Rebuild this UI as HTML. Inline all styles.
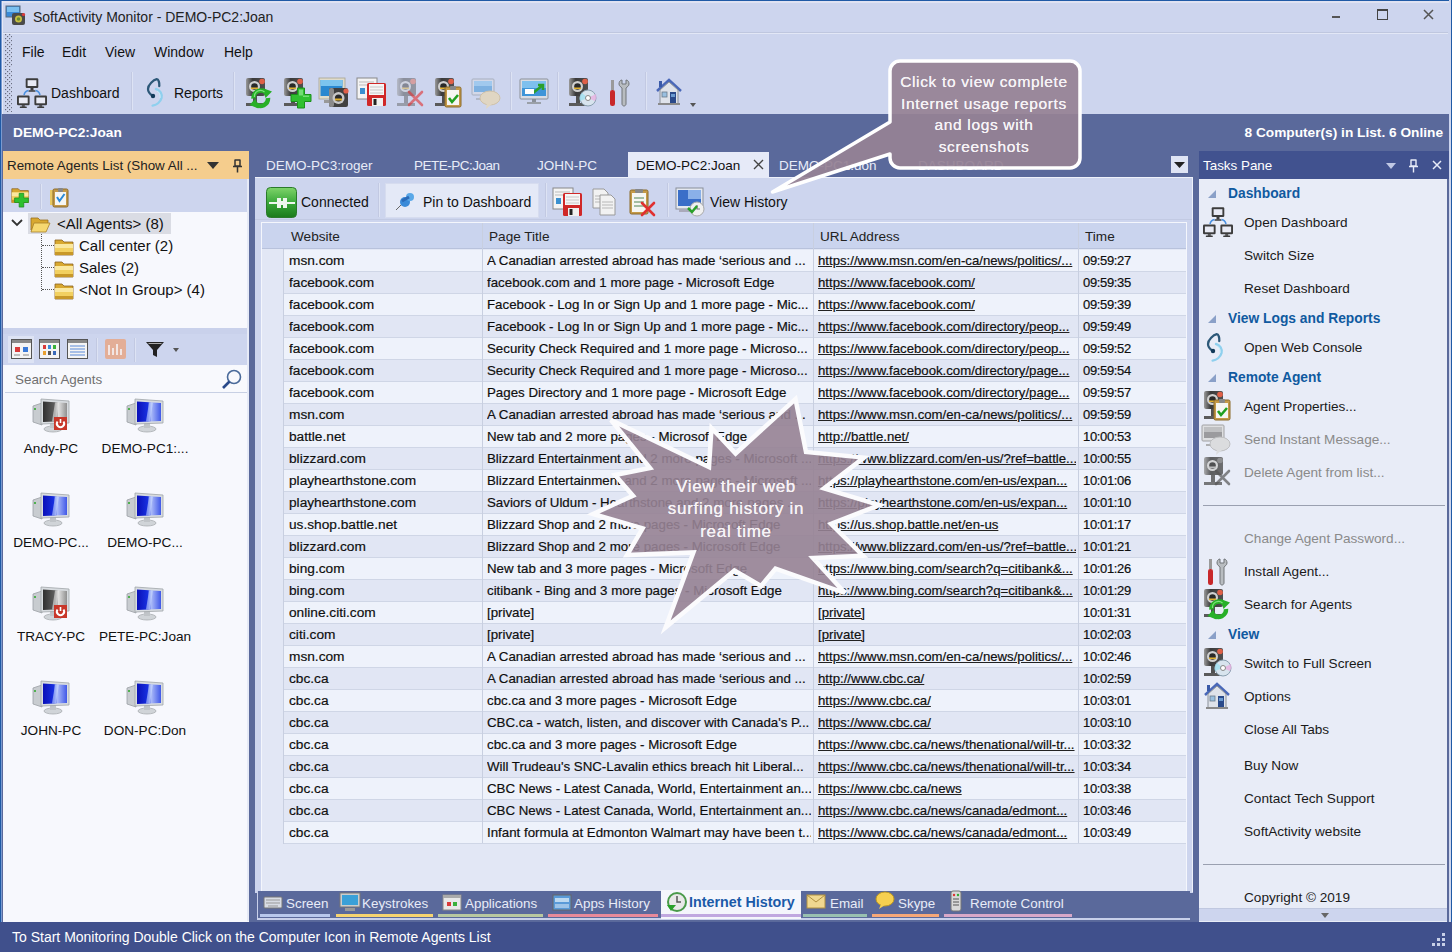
<!DOCTYPE html>
<html><head><meta charset="utf-8"><style>
*{margin:0;padding:0;box-sizing:border-box}
html,body{width:1452px;height:952px;overflow:hidden}
body{position:relative;background:#cdd5ee;font-family:"Liberation Sans",sans-serif;color:#1e1e1e}
.abs{position:absolute}
.ic{position:absolute;overflow:visible}
.t{position:absolute;white-space:nowrap;line-height:17px}
.title{font-size:14px;color:#222}
.menu{font-size:14px;color:#111}
.bandt{font-size:13.7px;font-weight:bold;color:#fff}
.pane{font-size:13.4px;color:#222}
.tree{font-size:15px;color:#111}
.agent{font-size:13.6px;color:#111;text-align:center}
.tab{font-size:13.5px;color:#e8ecf8}
.tbt{font-size:14px;color:#111}
.th{font-size:13.6px;color:#222}
.td{font-size:13.3px;color:#0a0a0a;-webkit-text-stroke:.2px #222}
.td.u{text-decoration:underline;font-size:13.2px}
.td.tm{font-size:13px;letter-spacing:-.35px}
.btab{font-size:13.4px;color:#e8ecf8}
.sect{font-size:13.8px;font-weight:bold;color:#105aa0}
.task{font-size:13.6px;color:#1a1a1a}
.task.grey{color:#8a8a8a}
.status{font-size:14px;color:#fff}
.grip{position:absolute;width:5px;background-image:linear-gradient(90deg,#cdd5ee 1px,transparent 1px),linear-gradient(#cdd5ee 1px,transparent 1px);background-color:#555a6a;background-size:2px 2px;opacity:.8}
.vsep{position:absolute;width:2px;background:#c2c9e2;border-right:1px solid #dde3f4}
.callt{font-size:16.5px;color:#f6f2f6;text-align:center;line-height:22px;letter-spacing:.4px;text-shadow:0 0 .4px #fff}
</style></head><body>
<svg width="0" height="0" style="position:absolute"><defs><linearGradient id="pcb" x1="0" x2="1"><stop offset="0" stop-color="#0a10b8"/><stop offset=".45" stop-color="#1830e0"/><stop offset=".6" stop-color="#a8b8f8"/><stop offset="1" stop-color="#4058e8"/></linearGradient><linearGradient id="pcg" x1="0" x2="1"><stop offset="0" stop-color="#303030"/><stop offset=".5" stop-color="#606060"/><stop offset=".65" stop-color="#e0e0e0"/><stop offset="1" stop-color="#909090"/></linearGradient></defs></svg><svg class="ic" style="left:5px;top:5px;" width="22" height="22" viewBox="0 0 22 22" ><rect x="1" y="1" width="14" height="11" fill="#3a8ad8" stroke="#5a6a7a" stroke-width="1"/>
<rect x="2" y="2" width="12" height="5" fill="#7ac0f0"/>
<rect x="7" y="8" width="13" height="12" rx="2" fill="#4a4a4a"/>
<circle cx="13.5" cy="14" r="3.5" fill="#c8c040"/><circle cx="13.5" cy="14" r="1.8" fill="#6a8a30"/>
<circle cx="18.5" cy="9.5" r="1.6" fill="#e03a3a"/></svg>
<div class="t title" style="left:33px;top:9px;">SoftActivity Monitor - DEMO-PC2:Joan</div>
<div class="abs" style="left:1332px;top:16px;width:8px;height:2px;background:#555"></div>
<div class="abs" style="left:1377px;top:9px;width:11px;height:11px;border:1px solid #444;border-top-width:2px"></div>
<svg class="ic" style="left:1423px;top:9px;" width="12" height="12" viewBox="0 0 12 12" ><path d="M1 1L10 10M10 1L1 10" stroke="#555" stroke-width="1.5"/></svg>
<div class="abs" style="left:2px;top:32px;width:1446px;height:1px;background:#bfc7df"></div>
<div class="abs" style="left:2px;top:33px;width:1446px;height:1px;background:#e2e7f6"></div>
<svg class="ic" style="left:5px;top:34px" width="7" height="33"><defs><pattern id="gp" width="4" height="4" patternUnits="userSpaceOnUse"><rect x="0" y="0" width="1.2" height="1.2" fill="#6a6e80"/><rect x="2" y="2" width="1.2" height="1.2" fill="#6a6e80"/></pattern></defs><rect width="7" height="33" fill="url(#gp)"/></svg>
<div class="t menu" style="left:22px;top:44px;">File</div>
<div class="t menu" style="left:62px;top:44px;">Edit</div>
<div class="t menu" style="left:105px;top:44px;">View</div>
<div class="t menu" style="left:154px;top:44px;">Window</div>
<div class="t menu" style="left:224px;top:44px;">Help</div>
<svg class="ic" style="left:5px;top:69px" width="7" height="43"><rect width="7" height="43" fill="url(#gp)"/></svg>
<svg class="ic" style="left:17px;top:77px;" width="31" height="31" viewBox="0 0 31 31" ><g fill="#3c3c3c">
<rect x="8.7" y="1.2" width="12.6" height="9.8" rx="1.2"/><rect x="13.5" y="11" width="3" height="2.5"/><rect x="11.5" y="13.2" width="7" height="1.6" rx=".6"/>
<rect x="0" y="18.6" width="12.6" height="9.6" rx="1.2"/><rect x="4.8" y="28.2" width="3" height="1.6"/><rect x="2.8" y="29.6" width="7" height="1.5" rx=".6"/>
<rect x="17.4" y="18.6" width="12.6" height="9.6" rx="1.2"/><rect x="22.2" y="28.2" width="3" height="1.6"/><rect x="20.2" y="29.6" width="7" height="1.5" rx=".6"/>
</g>
<g fill="#e8eaf4"><rect x="10.6" y="3.2" width="8.8" height="5.8"/><rect x="1.9" y="20.5" width="8.8" height="5.8"/><rect x="19.3" y="20.5" width="8.8" height="5.8"/></g>
<path d="M11.5 13.5Q8 14 7 18M18.5 13.5Q22 14 23 18" fill="none" stroke="#4a90e0" stroke-width="1.6"/></svg>
<div class="t menu" style="left:51px;top:85px;">Dashboard</div>
<div class="vsep" style="left:131px;top:72px;height:38px"></div>
<svg class="ic" style="left:145px;top:77px;" width="22" height="31" viewBox="0 0 22 31" ><path d="M11 12C15 13 17.5 17 16.5 21C15.5 25 11.5 28 7.6 28.6" fill="none" stroke="#8fd0ee" stroke-width="2.4" stroke-linecap="round"/>
<path d="M12 14C14.5 15 15.5 18 15 21" fill="none" stroke="#c8ecfa" stroke-width="1"/>
<path d="M14.3 9C14.6 5.5 13.5 2.2 11.8 2.2C8.5 3 3 7.5 3 12C3 15 5.5 17.5 8 19" fill="none" stroke="#2c5878" stroke-width="2.3" stroke-linecap="round"/>
<circle cx="8" cy="19" r="2.2" fill="#123a5a"/></svg>
<div class="t menu" style="left:174px;top:85px;">Reports</div>
<div class="vsep" style="left:233px;top:72px;height:38px"></div>
<svg class="ic" style="left:243px;top:77px;" width="32" height="32" viewBox="0 0 32 32" ><g opacity="1.0">
<defs><linearGradient id="cg" x1="0" x2="1"><stop offset="0" stop-color="#9a9a9a"/><stop offset=".35" stop-color="#3a3a3a"/><stop offset="1" stop-color="#505050"/></linearGradient></defs>
<rect x="3" y="1" width="19" height="18" rx="2" fill="url(#cg)"/>
<circle cx="11.5" cy="9.5" r="5.5" fill="#d0d0d0"/>
<circle cx="11.5" cy="9.5" r="3.3" fill="#2a2a2a"/>
<rect x="8" y="10.5" width="7" height="1.6" fill="#e0b030"/>
<circle cx="19" cy="4.5" r="2.8" fill="#e06048"/>
<rect x="10" y="19" width="4" height="7" fill="#505050"/>
<rect x="3" y="26" width="18" height="3" fill="#5a5a5a"/>
</g><g fill="none" stroke="#28b028" stroke-width="4.5">
<path d="M10.5 21.5 A7.5 7.5 0 0 1 23 15.5"/><path d="M25 21 A7.5 7.5 0 0 1 12.5 27"/></g>
<path d="M19.5 11 L29 14.5 L22.5 21 Z" fill="#28b028"/><path d="M15.5 31.5 L6.5 28 L12.5 21.5 Z" fill="#28b028"/>
<g fill="none" stroke="#90f090" stroke-width="1.2" opacity=".8"><path d="M11.5 20 A6 6 0 0 1 21.5 15"/></g></svg>
<svg class="ic" style="left:281px;top:77px;" width="32" height="32" viewBox="0 0 32 32" ><g opacity="1.0">
<defs><linearGradient id="cg" x1="0" x2="1"><stop offset="0" stop-color="#9a9a9a"/><stop offset=".35" stop-color="#3a3a3a"/><stop offset="1" stop-color="#505050"/></linearGradient></defs>
<rect x="3" y="1" width="19" height="18" rx="2" fill="url(#cg)"/>
<circle cx="11.5" cy="9.5" r="5.5" fill="#d0d0d0"/>
<circle cx="11.5" cy="9.5" r="3.3" fill="#2a2a2a"/>
<rect x="8" y="10.5" width="7" height="1.6" fill="#e0b030"/>
<circle cx="19" cy="4.5" r="2.8" fill="#e06048"/>
<rect x="10" y="19" width="4" height="7" fill="#505050"/>
<rect x="3" y="26" width="18" height="3" fill="#5a5a5a"/>
</g><path d="M16.5 11h7v6.5H30v7h-6.5V31h-7v-6.5H10v-7h6.5z" fill="#30c030" stroke="#1a901a" stroke-width="1"/>
<path d="M18 12.5h4v6h6v1.5h-6v-1.5h-4z" fill="#a0f0a0" opacity=".6"/></svg>
<svg class="ic" style="left:318px;top:77px;" width="32" height="32" viewBox="0 0 32 32" ><rect x="1" y="1" width="26" height="21" fill="#e0dccc" stroke="#a8a490" stroke-width=".8"/><rect x="2.5" y="3" width="22" height="16" fill="#2a88d0"/><rect x="2.5" y="3" width="22" height="6" fill="#7cc4ee"/><rect x="6" y="23" width="10" height="3" fill="#999"/><rect x="11" y="11" width="19" height="19" rx="2" fill="#404040"/><rect x="11" y="11" width="5" height="19" rx="2" fill="#8a8a8a"/><circle cx="20.5" cy="21" r="6" fill="#c8c8c8"/><circle cx="20.5" cy="21" r="3.6" fill="#2a2a2a"/><rect x="17" y="21.5" width="7" height="2" fill="#e0b030"/><circle cx="28" cy="14" r="2.6" fill="#e06048"/></svg>
<svg class="ic" style="left:355px;top:77px;" width="32" height="32" viewBox="0 0 32 32" ><rect x="2" y="1" width="20" height="21" fill="#f4f4f4" stroke="#888" stroke-width="1"/><path d="M4 5h15M4 8h15" stroke="#bbb"/><rect x="5" y="11" width="5" height="6" fill="#3a90d0"/><rect x="12" y="6" width="19" height="23" rx="1.5" fill="#d02828"/><rect x="14" y="7" width="15" height="11" fill="#f6f6f6"/><path d="M15 10h13M15 13h13M15 16h13" stroke="#c8c8c8"/><rect x="17" y="21" width="11" height="8" fill="#f0f0f0"/><rect x="18.5" y="22" width="3" height="6" fill="#222"/></svg>
<svg class="ic" style="left:394px;top:77px;" width="32" height="32" viewBox="0 0 32 32" ><g opacity="0.45">
<defs><linearGradient id="cg" x1="0" x2="1"><stop offset="0" stop-color="#9a9a9a"/><stop offset=".35" stop-color="#3a3a3a"/><stop offset="1" stop-color="#505050"/></linearGradient></defs>
<rect x="3" y="1" width="19" height="18" rx="2" fill="url(#cg)"/>
<circle cx="11.5" cy="9.5" r="5.5" fill="#d0d0d0"/>
<circle cx="11.5" cy="9.5" r="3.3" fill="#2a2a2a"/>
<rect x="8" y="10.5" width="7" height="1.6" fill="#e0b030"/>
<circle cx="19" cy="4.5" r="2.8" fill="#e06048"/>
<rect x="10" y="19" width="4" height="7" fill="#505050"/>
<rect x="3" y="26" width="18" height="3" fill="#5a5a5a"/>
</g><path d="M15 15L28 28M28 15L15 28" stroke="#e03030" stroke-width="2.6" stroke-linecap="round" opacity="0.6"/></svg>
<svg class="ic" style="left:432px;top:77px;" width="32" height="32" viewBox="0 0 32 32" ><g opacity="1.0">
<defs><linearGradient id="cg" x1="0" x2="1"><stop offset="0" stop-color="#9a9a9a"/><stop offset=".35" stop-color="#3a3a3a"/><stop offset="1" stop-color="#505050"/></linearGradient></defs>
<rect x="3" y="1" width="19" height="18" rx="2" fill="url(#cg)"/>
<circle cx="11.5" cy="9.5" r="5.5" fill="#d0d0d0"/>
<circle cx="11.5" cy="9.5" r="3.3" fill="#2a2a2a"/>
<rect x="8" y="10.5" width="7" height="1.6" fill="#e0b030"/>
<circle cx="19" cy="4.5" r="2.8" fill="#e06048"/>
<rect x="10" y="19" width="4" height="7" fill="#505050"/>
<rect x="3" y="26" width="18" height="3" fill="#5a5a5a"/>
</g><rect x="13" y="10" width="16" height="20" rx="1.5" fill="#c59a48" stroke="#8a6a2a" stroke-width="1"/>
<rect x="15" y="13" width="12" height="15" fill="#f6f6f2"/>
<rect x="18" y="9" width="6" height="4" rx="1" fill="#888"/><path d="M17 21l3 4l6 -7" fill="none" stroke="#20a020" stroke-width="2.6"/></svg>
<svg class="ic" style="left:471px;top:77px;" width="32" height="32" viewBox="0 0 32 32" ><g opacity=".55"><rect x="1" y="2" width="22" height="16" rx="1" fill="#d8dce4" stroke="#8a9099" stroke-width="1"/>
<rect x="3" y="4" width="18" height="11" fill="#3f95d8"/>
<rect x="3" y="4" width="18" height="5" fill="#7ec0ee"/>
<rect x="10" y="18" width="4" height="3" fill="#8a9099"/>
<rect x="5" y="21" width="14" height="2" fill="#9aa0a8"/><g opacity="1"><ellipse cx="19" cy="21" rx="10" ry="7" fill="#f0d8a0" stroke="#d0b070" stroke-width="1"/><path d="M16 26l-1 6l6 -5z" fill="#f0d8a0"/></g></g></svg>
<svg class="ic" style="left:519px;top:77px;" width="32" height="32" viewBox="0 0 32 32" ><rect x="1" y="2" width="28" height="20" rx="1" fill="#d8dce4" stroke="#8a9099" stroke-width="1"/>
<rect x="3" y="4" width="24" height="15" fill="#3f95d8"/>
<rect x="3" y="4" width="24" height="7" fill="#7ec0ee"/>
<rect x="13" y="22" width="4" height="3" fill="#8a9099"/>
<rect x="8" y="25" width="14" height="2" fill="#9aa0a8"/><path d="M14 16L24 8M19 8h5v5" stroke="#2aa02a" stroke-width="2.5" fill="none"/><rect x="6" y="12" width="9" height="5" fill="#fff"/></svg>
<svg class="ic" style="left:566px;top:77px;" width="32" height="32" viewBox="0 0 32 32" ><g opacity="1.0">
<defs><linearGradient id="cg" x1="0" x2="1"><stop offset="0" stop-color="#9a9a9a"/><stop offset=".35" stop-color="#3a3a3a"/><stop offset="1" stop-color="#505050"/></linearGradient></defs>
<rect x="3" y="1" width="19" height="18" rx="2" fill="url(#cg)"/>
<circle cx="11.5" cy="9.5" r="5.5" fill="#d0d0d0"/>
<circle cx="11.5" cy="9.5" r="3.3" fill="#2a2a2a"/>
<rect x="8" y="10.5" width="7" height="1.6" fill="#e0b030"/>
<circle cx="19" cy="4.5" r="2.8" fill="#e06048"/>
<rect x="10" y="19" width="4" height="7" fill="#505050"/>
<rect x="3" y="26" width="18" height="3" fill="#5a5a5a"/>
</g><circle cx="22" cy="21" r="8" fill="#d8e4ee" stroke="#8aa0b0" stroke-width="1"/>
<path d="M22 21L30 17A8 8 0 0 1 29 24z" fill="#e8b0e0" opacity=".8"/>
<path d="M22 21L14 24A8 8 0 0 1 16 16z" fill="#a0e0f0" opacity=".8"/>
<circle cx="22" cy="21" r="2.5" fill="#fff" stroke="#888" stroke-width="1"/></svg>
<svg class="ic" style="left:608px;top:77px;" width="32" height="32" viewBox="0 0 32 32" ><rect x="3" y="3" width="3" height="10" fill="#9a9a9a"/>
<rect x="2" y="13" width="5" height="16" rx="2.2" fill="#c8282a"/>
<path d="M14 3c-2 0-3 2-3 4s2 3 3 4v16c0 1 1 2 2 2s2-1 2-2V11c1-1 3-2 3-4s-1-4-3-4v4h-4z" fill="#b8bcc0" stroke="#707478" stroke-width="1"/></svg>
<svg class="ic" style="left:654px;top:77px;" width="32" height="32" viewBox="0 0 32 32" ><path d="M3 14L15 3L27 14" fill="none" stroke="#4a68b8" stroke-width="2.5"/>
<rect x="5" y="4" width="3" height="6" fill="#3a5aa8"/>
<path d="M6 13L15 5L24 13V27H6z" fill="#dfe3ea" stroke="#8a9098" stroke-width="1"/>
<rect x="8" y="15" width="5" height="5" fill="#9ac0e0" stroke="#6a7a8a" stroke-width=".8"/>
<rect x="16" y="15" width="6" height="12" fill="#2a4a8a"/>
<rect x="17" y="17" width="4" height="3" fill="#6a9ad0"/>
<rect x="4" y="26" width="22" height="2" fill="#8a8a8a"/></svg>
<div class="vsep" style="left:510px;top:72px;height:38px"></div>
<div class="vsep" style="left:557px;top:72px;height:38px"></div>
<div class="vsep" style="left:645px;top:72px;height:38px"></div>
<svg class="ic" style="left:690px;top:103px;" width="6" height="4" viewBox="0 0 6 4" ><path d="M0 0h6l-3 4z" fill="#555"/></svg>
<div class="abs" style="left:2px;top:114px;width:1448px;height:808px;background:#5a699b"></div>
<div class="t bandt" style="left:13px;top:124px;">DEMO-PC2:Joan</div>
<div class="t bandt" style="right:9px;top:124px">8 Computer(s) in List. 6 Online</div>
<div class="abs" style="left:3px;top:151px;width:246px;height:771px;background:#f7f8fd"></div>
<div class="abs" style="left:3px;top:151px;width:246px;height:28px;background:#f5cd8d"></div>
<div class="t pane" style="left:7px;top:157px;">Remote Agents List (Show All ...</div>
<svg class="ic" style="left:207px;top:162px;" width="12" height="8" viewBox="0 0 12 8" ><path d="M0 0h12l-6 7z" fill="#333"/></svg>
<svg class="ic" style="left:232px;top:159px;" width="11" height="14" viewBox="0 0 11 14" ><path d="M2.5 1h6M3 1v6h5V1M1 7.5h9M5.5 7.5v6" stroke="#333" stroke-width="1.5" fill="none"/></svg>
<div class="abs" style="left:3px;top:179px;width:246px;height:33px;background:#cdd5ee"></div>
<svg class="ic" style="left:10px;top:186px;" width="22" height="22" viewBox="0 0 22 24" ><path d="M1 3h7l2 2h9v13H1z" fill="#d8a830" stroke="#8a6020" stroke-width=".8"/>
<rect x="1" y="7" width="18" height="11" fill="#f2d060"/>
<rect x="1" y="7" width="18" height="4" fill="#fae8a0"/>
<rect x="1" y="15" width="18" height="3" fill="#c89828"/><path d="M9 8h5v5h5v5h-5v5h-5v-5H4v-5h5z" fill="#2ec02e" stroke="#1a8a1a" stroke-width=".8"/></svg>
<div class="vsep" style="left:40px;top:184px;height:25px"></div>
<svg class="ic" style="left:49px;top:186px;" width="22" height="22" viewBox="0 0 22 22" ><rect x="1" y="4" width="6" height="15" fill="#e8c860"/><rect x="4" y="3" width="15" height="18" rx="1.5" fill="#c59a48" stroke="#8a6a2a" stroke-width="1"/>
<rect x="6" y="6" width="11" height="13" fill="#f6f6f2"/>
<rect x="9" y="2" width="5" height="4" rx="1" fill="#888"/><path d="M8 11l2.5 4l5-7" fill="none" stroke="#2a8ad8" stroke-width="2"/></svg>
<div class="abs" style="left:28px;top:213px;width:143px;height:21px;background:#dadce4"></div>
<svg class="ic" style="left:11px;top:219px;" width="12" height="9" viewBox="0 0 12 9" ><path d="M1 1l5 5l5-5" stroke="#333" stroke-width="1.8" fill="none"/></svg>
<svg class="ic" style="left:30px;top:214px;" width="22" height="20" viewBox="0 0 22 20" ><path d="M1 4h7l2 2h8v4H5L1 16z" fill="#d8a830" stroke="#9a7020" stroke-width=".8"/>
<path d="M4 9h16l-4 9H1z" fill="#f6d870" stroke="#a88028" stroke-width=".8"/></svg>
<div class="t tree" style="left:57px;top:215px;">&lt;All Agents&gt; (8)</div>
<div class="abs" style="left:41px;top:234px;width:0;height:57px;border-left:1px dotted #555"></div>
<div class="abs" style="left:42px;top:245px;width:12px;height:0;border-top:1px dotted #555"></div>
<svg class="ic" style="left:54px;top:237px;" width="20" height="19" viewBox="0 0 20 19" ><path d="M1 3h7l2 2h9v13H1z" fill="#d8a830" stroke="#8a6020" stroke-width=".8"/>
<rect x="1" y="7" width="18" height="11" fill="#f2d060"/>
<rect x="1" y="7" width="18" height="4" fill="#fae8a0"/>
<rect x="1" y="15" width="18" height="3" fill="#c89828"/></svg>
<div class="t tree" style="left:79px;top:237px;">Call center (2)</div>
<div class="abs" style="left:42px;top:267px;width:12px;height:0;border-top:1px dotted #555"></div>
<svg class="ic" style="left:54px;top:259px;" width="20" height="19" viewBox="0 0 20 19" ><path d="M1 3h7l2 2h9v13H1z" fill="#d8a830" stroke="#8a6020" stroke-width=".8"/>
<rect x="1" y="7" width="18" height="11" fill="#f2d060"/>
<rect x="1" y="7" width="18" height="4" fill="#fae8a0"/>
<rect x="1" y="15" width="18" height="3" fill="#c89828"/></svg>
<div class="t tree" style="left:79px;top:259px;">Sales (2)</div>
<div class="abs" style="left:42px;top:289px;width:12px;height:0;border-top:1px dotted #555"></div>
<svg class="ic" style="left:54px;top:281px;" width="20" height="19" viewBox="0 0 20 19" ><path d="M1 3h7l2 2h9v13H1z" fill="#d8a830" stroke="#8a6020" stroke-width=".8"/>
<rect x="1" y="7" width="18" height="11" fill="#f2d060"/>
<rect x="1" y="7" width="18" height="4" fill="#fae8a0"/>
<rect x="1" y="15" width="18" height="3" fill="#c89828"/></svg>
<div class="t tree" style="left:79px;top:281px;">&lt;Not In Group&gt; (4)</div>
<div class="abs" style="left:3px;top:328px;width:246px;height:6px;background:#c9d1eb"></div>
<div class="abs" style="left:3px;top:334px;width:246px;height:31px;background:#cdd5ee"></div>
<div class="abs" style="left:8px;top:336px;width:26px;height:27px;background:#dde3f4"></div>
<svg class="ic" style="left:11px;top:339px;" width="21" height="20" viewBox="0 0 21 20" ><rect x=".5" y=".5" width="20" height="19" fill="#f4f4f4" stroke="#555" stroke-width="1"/><rect x="1" y="1" width="19" height="3" fill="#888"/><rect x="4" y="8" width="5" height="5" fill="#d83a3a"/><rect x="12" y="8" width="5" height="5" fill="#3a7ad8"/><path d="M3 16h6M12 16h6" stroke="#888"/></svg>
<svg class="ic" style="left:39px;top:339px;" width="21" height="20" viewBox="0 0 21 20" ><rect x=".5" y=".5" width="20" height="19" fill="#f4f4f4" stroke="#555" stroke-width="1"/><rect x="1" y="1" width="19" height="3" fill="#888"/><rect x="4" y="6" width="3" height="4" fill="#d83a3a"/><rect x="9" y="6" width="3" height="4" fill="#3a8ad8"/><rect x="14" y="6" width="3" height="4" fill="#3ab03a"/><rect x="4" y="12" width="3" height="4" fill="#e8a030"/><rect x="9" y="12" width="3" height="4" fill="#555"/><rect x="14" y="12" width="3" height="4" fill="#3a6ab8"/></svg>
<svg class="ic" style="left:67px;top:339px;" width="21" height="20" viewBox="0 0 21 20" ><rect x=".5" y=".5" width="20" height="19" fill="#f4f4f4" stroke="#555" stroke-width="1"/><rect x="1" y="1" width="19" height="3" fill="#888"/><path d="M3 7h15M3 10h15M3 13h15M3 16h15" stroke="#5a8ad8" stroke-width="1"/></svg>
<div class="vsep" style="left:96px;top:338px;height:24px"></div>
<svg class="ic" style="left:105px;top:339px;" width="21" height="20" viewBox="0 0 21 20" opacity="0.85"><rect x="0" y="0" width="21" height="20" rx="2" fill="#e8a888"/><path d="M4 16V6M8 16V9M12 16V5M16 16V10" stroke="#fff" stroke-width="1.5"/></svg>
<div class="vsep" style="left:134px;top:338px;height:24px"></div>
<svg class="ic" style="left:145px;top:341px;" width="20" height="17" viewBox="0 0 20 17" ><path d="M1 1h18l-7 8v7l-4-2V9z" fill="#222"/><path d="M3 2h14l-1 1H4z" fill="#aaa"/></svg>
<svg class="ic" style="left:173px;top:348px;" width="6" height="4" viewBox="0 0 6 4" ><path d="M0 0h6l-3 4z" fill="#555"/></svg>
<div class="abs" style="left:5px;top:366px;width:242px;height:27px;background:#f8f9fd;border-bottom:1px solid #c8d0e4"></div>
<div class="t pane" style="left:15px;top:371px;color:#707070">Search Agents</div>
<svg class="ic" style="left:221px;top:369px;" width="22" height="22" viewBox="0 0 22 22" ><circle cx="13" cy="8" r="6.5" fill="none" stroke="#4a6a9a" stroke-width="1.6"/><path d="M8.5 12.5L2 19" stroke="#2a4a8a" stroke-width="2.6"/></svg>
<svg class="ic" style="left:31px;top:396px;" width="40" height="37" viewBox="0 0 40 37" ><path d="M2 10l9-3v22l-9-3z" fill="#c8ccd0" stroke="#9aa0a4" stroke-width=".8"/>
<rect x="3" y="12" width="2" height="2" fill="#50b050"/>
<ellipse cx="22" cy="33" rx="9" ry="3" fill="#d0d4d8" stroke="#a8acb0" stroke-width=".8"/>
<rect x="19" y="27" width="6" height="5" fill="#c0c4c8"/>
<path d="M10 3l28 2v22l-28 1z" fill="#d8dce0" stroke="#a0a4a8" stroke-width=".8"/>
<path d="M12 5.5l24 1.5v18l-24 1z" fill="url(#pcg)"/>
<path d="M24 6.5l4 .3l-3 18.5l-4 .2z" fill="#e8e8e8" opacity=".6"/><rect x="23" y="21" width="13" height="13" fill="#c8372a"/>
<path d="M26.5 25.5a3.6 3.6 0 1 0 6 0" fill="none" stroke="#fff" stroke-width="2"/><rect x="28.7" y="23" width="1.6" height="4" fill="#fff"/></svg>
<div class="t agent" style="left:-9px;width:120px;top:440px">Andy-PC</div>
<svg class="ic" style="left:125px;top:396px;" width="40" height="37" viewBox="0 0 40 37" ><path d="M2 10l9-3v22l-9-3z" fill="#c8ccd0" stroke="#9aa0a4" stroke-width=".8"/>
<rect x="3" y="12" width="2" height="2" fill="#50b050"/>
<ellipse cx="22" cy="33" rx="9" ry="3" fill="#d0d4d8" stroke="#a8acb0" stroke-width=".8"/>
<rect x="19" y="27" width="6" height="5" fill="#c0c4c8"/>
<path d="M10 3l28 2v22l-28 1z" fill="#d8dce0" stroke="#a0a4a8" stroke-width=".8"/>
<path d="M12 5.5l24 1.5v18l-24 1z" fill="url(#pcb)"/>
<path d="M24 6.5l4 .3l-3 18.5l-4 .2z" fill="#c8d8ff" opacity=".6"/></svg>
<div class="t agent" style="left:85px;width:120px;top:440px">DEMO-PC1:...</div>
<svg class="ic" style="left:31px;top:490px;" width="40" height="37" viewBox="0 0 40 37" ><path d="M2 10l9-3v22l-9-3z" fill="#c8ccd0" stroke="#9aa0a4" stroke-width=".8"/>
<rect x="3" y="12" width="2" height="2" fill="#50b050"/>
<ellipse cx="22" cy="33" rx="9" ry="3" fill="#d0d4d8" stroke="#a8acb0" stroke-width=".8"/>
<rect x="19" y="27" width="6" height="5" fill="#c0c4c8"/>
<path d="M10 3l28 2v22l-28 1z" fill="#d8dce0" stroke="#a0a4a8" stroke-width=".8"/>
<path d="M12 5.5l24 1.5v18l-24 1z" fill="url(#pcb)"/>
<path d="M24 6.5l4 .3l-3 18.5l-4 .2z" fill="#c8d8ff" opacity=".6"/></svg>
<div class="t agent" style="left:-9px;width:120px;top:534px">DEMO-PC...</div>
<svg class="ic" style="left:125px;top:490px;" width="40" height="37" viewBox="0 0 40 37" ><path d="M2 10l9-3v22l-9-3z" fill="#c8ccd0" stroke="#9aa0a4" stroke-width=".8"/>
<rect x="3" y="12" width="2" height="2" fill="#50b050"/>
<ellipse cx="22" cy="33" rx="9" ry="3" fill="#d0d4d8" stroke="#a8acb0" stroke-width=".8"/>
<rect x="19" y="27" width="6" height="5" fill="#c0c4c8"/>
<path d="M10 3l28 2v22l-28 1z" fill="#d8dce0" stroke="#a0a4a8" stroke-width=".8"/>
<path d="M12 5.5l24 1.5v18l-24 1z" fill="url(#pcb)"/>
<path d="M24 6.5l4 .3l-3 18.5l-4 .2z" fill="#c8d8ff" opacity=".6"/></svg>
<div class="t agent" style="left:85px;width:120px;top:534px">DEMO-PC...</div>
<svg class="ic" style="left:31px;top:584px;" width="40" height="37" viewBox="0 0 40 37" ><path d="M2 10l9-3v22l-9-3z" fill="#c8ccd0" stroke="#9aa0a4" stroke-width=".8"/>
<rect x="3" y="12" width="2" height="2" fill="#50b050"/>
<ellipse cx="22" cy="33" rx="9" ry="3" fill="#d0d4d8" stroke="#a8acb0" stroke-width=".8"/>
<rect x="19" y="27" width="6" height="5" fill="#c0c4c8"/>
<path d="M10 3l28 2v22l-28 1z" fill="#d8dce0" stroke="#a0a4a8" stroke-width=".8"/>
<path d="M12 5.5l24 1.5v18l-24 1z" fill="url(#pcg)"/>
<path d="M24 6.5l4 .3l-3 18.5l-4 .2z" fill="#e8e8e8" opacity=".6"/><rect x="23" y="21" width="13" height="13" fill="#c8372a"/>
<path d="M26.5 25.5a3.6 3.6 0 1 0 6 0" fill="none" stroke="#fff" stroke-width="2"/><rect x="28.7" y="23" width="1.6" height="4" fill="#fff"/></svg>
<div class="t agent" style="left:-9px;width:120px;top:628px">TRACY-PC</div>
<svg class="ic" style="left:125px;top:584px;" width="40" height="37" viewBox="0 0 40 37" ><path d="M2 10l9-3v22l-9-3z" fill="#c8ccd0" stroke="#9aa0a4" stroke-width=".8"/>
<rect x="3" y="12" width="2" height="2" fill="#50b050"/>
<ellipse cx="22" cy="33" rx="9" ry="3" fill="#d0d4d8" stroke="#a8acb0" stroke-width=".8"/>
<rect x="19" y="27" width="6" height="5" fill="#c0c4c8"/>
<path d="M10 3l28 2v22l-28 1z" fill="#d8dce0" stroke="#a0a4a8" stroke-width=".8"/>
<path d="M12 5.5l24 1.5v18l-24 1z" fill="url(#pcb)"/>
<path d="M24 6.5l4 .3l-3 18.5l-4 .2z" fill="#c8d8ff" opacity=".6"/></svg>
<div class="t agent" style="left:85px;width:120px;top:628px">PETE-PC:Joan</div>
<svg class="ic" style="left:31px;top:678px;" width="40" height="37" viewBox="0 0 40 37" ><path d="M2 10l9-3v22l-9-3z" fill="#c8ccd0" stroke="#9aa0a4" stroke-width=".8"/>
<rect x="3" y="12" width="2" height="2" fill="#50b050"/>
<ellipse cx="22" cy="33" rx="9" ry="3" fill="#d0d4d8" stroke="#a8acb0" stroke-width=".8"/>
<rect x="19" y="27" width="6" height="5" fill="#c0c4c8"/>
<path d="M10 3l28 2v22l-28 1z" fill="#d8dce0" stroke="#a0a4a8" stroke-width=".8"/>
<path d="M12 5.5l24 1.5v18l-24 1z" fill="url(#pcb)"/>
<path d="M24 6.5l4 .3l-3 18.5l-4 .2z" fill="#c8d8ff" opacity=".6"/></svg>
<div class="t agent" style="left:-9px;width:120px;top:722px">JOHN-PC</div>
<svg class="ic" style="left:125px;top:678px;" width="40" height="37" viewBox="0 0 40 37" ><path d="M2 10l9-3v22l-9-3z" fill="#c8ccd0" stroke="#9aa0a4" stroke-width=".8"/>
<rect x="3" y="12" width="2" height="2" fill="#50b050"/>
<ellipse cx="22" cy="33" rx="9" ry="3" fill="#d0d4d8" stroke="#a8acb0" stroke-width=".8"/>
<rect x="19" y="27" width="6" height="5" fill="#c0c4c8"/>
<path d="M10 3l28 2v22l-28 1z" fill="#d8dce0" stroke="#a0a4a8" stroke-width=".8"/>
<path d="M12 5.5l24 1.5v18l-24 1z" fill="url(#pcb)"/>
<path d="M24 6.5l4 .3l-3 18.5l-4 .2z" fill="#c8d8ff" opacity=".6"/></svg>
<div class="t agent" style="left:85px;width:120px;top:722px">DON-PC:Don</div>
<div class="abs" style="left:247px;top:179px;width:2px;height:742px;background:#e6eaf6"></div>
<div class="abs" style="left:255px;top:177px;width:938px;height:716px;background:#cdd5ee"></div>
<div class="abs" style="left:255px;top:177px;width:938px;height:1px;background:#eef1fa"></div>
<div class="abs" style="left:261px;top:222px;width:926px;height:670px;background:#e2e7f5;border-left:1px solid #f4f6fc;border-right:1px solid #f4f6fc"></div>
<div class="abs" style="left:255px;top:219px;width:938px;height:1px;background:#c2cae3"></div>
<div class="abs" style="left:1192px;top:177px;width:1px;height:715px;background:#eef1fa"></div>
<div class="t tab" style="left:266px;top:157px;">DEMO-PC3:roger</div>
<div class="t tab" style="left:414px;top:157px;letter-spacing:-.5px">PETE-PC:Joan</div>
<div class="t tab" style="left:537px;top:157px;">JOHN-PC</div>
<div class="t tab" style="left:779px;top:157px;">DEMO-PC1:don</div>
<div class="t tab" style="left:918px;top:157px;">DASHBOARD</div>
<div class="abs" style="left:628px;top:152px;width:141px;height:26px;background:#e6eaf8"></div>
<div class="t tab" style="left:636px;top:157px;color:#111">DEMO-PC2:Joan</div>
<svg class="ic" style="left:753px;top:159px;" width="11" height="11" viewBox="0 0 11 11" ><path d="M1 1L10 10M10 1L1 10" stroke="#444" stroke-width="1.4"/></svg>
<div class="abs" style="left:1171px;top:156px;width:17px;height:17px;background:#dfe4f4"></div>
<svg class="ic" style="left:1174px;top:162px;" width="11" height="7" viewBox="0 0 11 7" ><path d="M0 0h11l-5.5 6z" fill="#222"/></svg>
<svg class="ic" style="left:266px;top:187px;" width="32" height="31" viewBox="0 0 32 31" ><defs><linearGradient id="gg" x1="0" y1="0" x2="0" y2="1"><stop offset="0" stop-color="#7fd46a"/><stop offset=".5" stop-color="#3aa83a"/><stop offset="1" stop-color="#1a7a1a"/></linearGradient></defs>
<rect x=".5" y=".5" width="30" height="30" rx="4" fill="url(#gg)" stroke="#2a7a2a"/>
<path d="M3 15h8v-4h4v3h2v-3h4v4h8v2h-8v4h-4v-3h-2v3h-4v-4H3z" fill="#eef6ee"/></svg>
<div class="t tbt" style="left:301px;top:194px;">Connected</div>
<div class="vsep" style="left:378px;top:183px;height:34px"></div>
<div class="abs" style="left:385px;top:183px;width:154px;height:35px;background:#e4e9f7;border:1px solid #d6dcef"></div>
<svg class="ic" style="left:393px;top:192px;" width="24" height="20" viewBox="0 0 24 20" ><path d="M3 18l6-6" stroke="#666" stroke-width="1"/><circle cx="12" cy="10" r="5" fill="#3a8ad8"/><circle cx="17" cy="5" r="4" fill="#5aa8e8"/><path d="M9 9l7-4" stroke="#2a6ab8" stroke-width="3"/></svg>
<div class="t tbt" style="left:423px;top:194px;">Pin to Dashboard</div>
<div class="vsep" style="left:545px;top:183px;height:34px"></div>
<svg class="ic" style="left:551px;top:186px;" width="32" height="32" viewBox="0 0 32 32" ><rect x="2" y="2" width="20" height="21" fill="#f4f4f4" stroke="#888" stroke-width="1"/><path d="M4 6h15M4 9h15" stroke="#bbb"/><rect x="5" y="12" width="5" height="6" fill="#3a90d0"/><rect x="12" y="7" width="19" height="23" rx="1.5" fill="#d02828"/><rect x="14" y="8" width="15" height="11" fill="#f6f6f6"/><path d="M15 11h13M15 14h13M15 17h13" stroke="#c8c8c8"/><rect x="17" y="22" width="11" height="8" fill="#f0f0f0"/><rect x="18.5" y="23" width="3" height="6" fill="#222"/></svg>
<svg class="ic" style="left:591px;top:186px;" width="28" height="32" viewBox="0 0 28 32" ><path d="M2 3h11l4 4v15h-15z" fill="#f2f2f2" stroke="#9a9a9a" stroke-width="1"/>
<path d="M4 10h11M4 13h11M4 16h11" stroke="#b8b8b8" stroke-width="1"/><path d="M9 9h11l4 4v16h-15z" fill="#f2f2f2" stroke="#9a9a9a" stroke-width="1"/>
<path d="M11 16h11M11 19h11M11 22h11" stroke="#b8b8b8" stroke-width="1"/></svg>
<svg class="ic" style="left:627px;top:186px;" width="32" height="32" viewBox="0 0 32 32" ><rect x="3" y="4" width="18" height="24" rx="1.5" fill="#c59a48" stroke="#8a6a2a" stroke-width="1"/>
<rect x="5" y="7" width="14" height="19" fill="#f6f6f2"/>
<rect x="8" y="3" width="8" height="4" rx="1" fill="#888"/><path d="M7 12h10M7 16h10M7 20h10" stroke="#8a8" stroke-width="1.5"/><path d="M15 17L27 29M27 17L15 29" stroke="#e03030" stroke-width="2.6" stroke-linecap="round" opacity="1"/></svg>
<div class="vsep" style="left:667px;top:183px;height:34px"></div>
<svg class="ic" style="left:675px;top:186px;" width="32" height="32" viewBox="0 0 32 32" ><rect x="1" y="2" width="27" height="21" fill="#e4e8f0" stroke="#8a9099"/><rect x="3" y="4" width="23" height="16" fill="#3a6ec8"/>
<rect x="13" y="4" width="13" height="9" fill="#8ab0e8"/><rect x="4" y="23" width="20" height="3" fill="#aab"/>
<circle cx="22" cy="23" r="7" fill="#f0f0f0" stroke="#aaa"/><path d="M22 19v4h3" stroke="#777" stroke-width="1.2" fill="none"/>
<path d="M13 22l4 4l5-6" stroke="#2aa02a" stroke-width="2.5" fill="none"/></svg>
<div class="t tbt" style="left:710px;top:194px;">View History</div>
<div class="abs" style="left:261px;top:222px;width:926px;height:1px;background:#f4f6fc"></div>
<div class="abs" style="left:262px;top:223px;width:924px;height:26px;background:#cad4ee"></div>
<div class="abs" style="left:262px;top:248px;width:924px;height:1px;background:#b8c2dc"></div>
<div class="abs" style="left:482px;top:223px;width:1px;height:620px;background:#c8cfe0"></div>
<div class="abs" style="left:813px;top:223px;width:1px;height:620px;background:#c8cfe0"></div>
<div class="abs" style="left:1078px;top:223px;width:1px;height:620px;background:#c8cfe0"></div>
<div class="abs" style="left:283px;top:249px;width:1px;height:595px;background:#c8cfe0"></div>
<div class="t th" style="left:291px;top:228px;">Website</div>
<div class="t th" style="left:489px;top:228px;">Page Title</div>
<div class="t th" style="left:820px;top:228px;">URL Address</div>
<div class="t th" style="left:1085px;top:228px;">Time</div>
<div class="abs" style="left:284px;top:250px;width:902px;height:22px;background:#eef2fb;border-bottom:1px solid #cfd6e6"></div>
<div class="abs" style="left:284px;top:272px;width:902px;height:22px;background:#e1e6f4;border-bottom:1px solid #cfd6e6"></div>
<div class="abs" style="left:284px;top:294px;width:902px;height:22px;background:#eef2fb;border-bottom:1px solid #cfd6e6"></div>
<div class="abs" style="left:284px;top:316px;width:902px;height:22px;background:#e1e6f4;border-bottom:1px solid #cfd6e6"></div>
<div class="abs" style="left:284px;top:338px;width:902px;height:22px;background:#eef2fb;border-bottom:1px solid #cfd6e6"></div>
<div class="abs" style="left:284px;top:360px;width:902px;height:22px;background:#e1e6f4;border-bottom:1px solid #cfd6e6"></div>
<div class="abs" style="left:284px;top:382px;width:902px;height:22px;background:#eef2fb;border-bottom:1px solid #cfd6e6"></div>
<div class="abs" style="left:284px;top:404px;width:902px;height:22px;background:#e1e6f4;border-bottom:1px solid #cfd6e6"></div>
<div class="abs" style="left:284px;top:426px;width:902px;height:22px;background:#eef2fb;border-bottom:1px solid #cfd6e6"></div>
<div class="abs" style="left:284px;top:448px;width:902px;height:22px;background:#e1e6f4;border-bottom:1px solid #cfd6e6"></div>
<div class="abs" style="left:284px;top:470px;width:902px;height:22px;background:#eef2fb;border-bottom:1px solid #cfd6e6"></div>
<div class="abs" style="left:284px;top:492px;width:902px;height:22px;background:#e1e6f4;border-bottom:1px solid #cfd6e6"></div>
<div class="abs" style="left:284px;top:514px;width:902px;height:22px;background:#eef2fb;border-bottom:1px solid #cfd6e6"></div>
<div class="abs" style="left:284px;top:536px;width:902px;height:22px;background:#e1e6f4;border-bottom:1px solid #cfd6e6"></div>
<div class="abs" style="left:284px;top:558px;width:902px;height:22px;background:#eef2fb;border-bottom:1px solid #cfd6e6"></div>
<div class="abs" style="left:284px;top:580px;width:902px;height:22px;background:#e1e6f4;border-bottom:1px solid #cfd6e6"></div>
<div class="abs" style="left:284px;top:602px;width:902px;height:22px;background:#eef2fb;border-bottom:1px solid #cfd6e6"></div>
<div class="abs" style="left:284px;top:624px;width:902px;height:22px;background:#e1e6f4;border-bottom:1px solid #cfd6e6"></div>
<div class="abs" style="left:284px;top:646px;width:902px;height:22px;background:#eef2fb;border-bottom:1px solid #cfd6e6"></div>
<div class="abs" style="left:284px;top:668px;width:902px;height:22px;background:#e1e6f4;border-bottom:1px solid #cfd6e6"></div>
<div class="abs" style="left:284px;top:690px;width:902px;height:22px;background:#eef2fb;border-bottom:1px solid #cfd6e6"></div>
<div class="abs" style="left:284px;top:712px;width:902px;height:22px;background:#e1e6f4;border-bottom:1px solid #cfd6e6"></div>
<div class="abs" style="left:284px;top:734px;width:902px;height:22px;background:#eef2fb;border-bottom:1px solid #cfd6e6"></div>
<div class="abs" style="left:284px;top:756px;width:902px;height:22px;background:#e1e6f4;border-bottom:1px solid #cfd6e6"></div>
<div class="abs" style="left:284px;top:778px;width:902px;height:22px;background:#eef2fb;border-bottom:1px solid #cfd6e6"></div>
<div class="abs" style="left:284px;top:800px;width:902px;height:22px;background:#e1e6f4;border-bottom:1px solid #cfd6e6"></div>
<div class="abs" style="left:284px;top:822px;width:902px;height:22px;background:#eef2fb;border-bottom:1px solid #cfd6e6"></div>
<div class="abs" style="left:482px;top:249px;width:1px;height:594px;background:#c8cfe0"></div>
<div class="abs" style="left:813px;top:249px;width:1px;height:594px;background:#c8cfe0"></div>
<div class="abs" style="left:1078px;top:249px;width:1px;height:594px;background:#c8cfe0"></div>
<div class="t td" style="left:289px;top:252px;width:190px;overflow:hidden;font-size:13.7px">msn.com</div>
<div class="t td" style="left:487px;top:252px;width:324px;overflow:hidden">A Canadian arrested abroad has made ‘serious and ...</div>
<div class="t td u" style="left:818px;top:252px;width:258px;overflow:hidden">https://www.msn.com/en-ca/news/politics/...</div>
<div class="t td tm" style="left:1083px;top:252px;">09:59:27</div>
<div class="t td" style="left:289px;top:274px;width:190px;overflow:hidden;font-size:13.7px">facebook.com</div>
<div class="t td" style="left:487px;top:274px;width:324px;overflow:hidden">facebook.com and 1 more page - Microsoft Edge</div>
<div class="t td u" style="left:818px;top:274px;width:258px;overflow:hidden">https://www.facebook.com/</div>
<div class="t td tm" style="left:1083px;top:274px;">09:59:35</div>
<div class="t td" style="left:289px;top:296px;width:190px;overflow:hidden;font-size:13.7px">facebook.com</div>
<div class="t td" style="left:487px;top:296px;width:324px;overflow:hidden">Facebook - Log In or Sign Up and 1 more page - Mic...</div>
<div class="t td u" style="left:818px;top:296px;width:258px;overflow:hidden">https://www.facebook.com/</div>
<div class="t td tm" style="left:1083px;top:296px;">09:59:39</div>
<div class="t td" style="left:289px;top:318px;width:190px;overflow:hidden;font-size:13.7px">facebook.com</div>
<div class="t td" style="left:487px;top:318px;width:324px;overflow:hidden">Facebook - Log In or Sign Up and 1 more page - Mic...</div>
<div class="t td u" style="left:818px;top:318px;width:258px;overflow:hidden">https://www.facebook.com/directory/peop...</div>
<div class="t td tm" style="left:1083px;top:318px;">09:59:49</div>
<div class="t td" style="left:289px;top:340px;width:190px;overflow:hidden;font-size:13.7px">facebook.com</div>
<div class="t td" style="left:487px;top:340px;width:324px;overflow:hidden">Security Check Required and 1 more page - Microso...</div>
<div class="t td u" style="left:818px;top:340px;width:258px;overflow:hidden">https://www.facebook.com/directory/peop...</div>
<div class="t td tm" style="left:1083px;top:340px;">09:59:52</div>
<div class="t td" style="left:289px;top:362px;width:190px;overflow:hidden;font-size:13.7px">facebook.com</div>
<div class="t td" style="left:487px;top:362px;width:324px;overflow:hidden">Security Check Required and 1 more page - Microso...</div>
<div class="t td u" style="left:818px;top:362px;width:258px;overflow:hidden">https://www.facebook.com/directory/page...</div>
<div class="t td tm" style="left:1083px;top:362px;">09:59:54</div>
<div class="t td" style="left:289px;top:384px;width:190px;overflow:hidden;font-size:13.7px">facebook.com</div>
<div class="t td" style="left:487px;top:384px;width:324px;overflow:hidden">Pages Directory and 1 more page - Microsoft Edge</div>
<div class="t td u" style="left:818px;top:384px;width:258px;overflow:hidden">https://www.facebook.com/directory/page...</div>
<div class="t td tm" style="left:1083px;top:384px;">09:59:57</div>
<div class="t td" style="left:289px;top:406px;width:190px;overflow:hidden;font-size:13.7px">msn.com</div>
<div class="t td" style="left:487px;top:406px;width:324px;overflow:hidden">A Canadian arrested abroad has made ‘serious and ...</div>
<div class="t td u" style="left:818px;top:406px;width:258px;overflow:hidden">https://www.msn.com/en-ca/news/politics/...</div>
<div class="t td tm" style="left:1083px;top:406px;">09:59:59</div>
<div class="t td" style="left:289px;top:428px;width:190px;overflow:hidden;font-size:13.7px">battle.net</div>
<div class="t td" style="left:487px;top:428px;width:324px;overflow:hidden">New tab and 2 more pages - Microsoft Edge</div>
<div class="t td u" style="left:818px;top:428px;width:258px;overflow:hidden">http://battle.net/</div>
<div class="t td tm" style="left:1083px;top:428px;">10:00:53</div>
<div class="t td" style="left:289px;top:450px;width:190px;overflow:hidden;font-size:13.7px">blizzard.com</div>
<div class="t td" style="left:487px;top:450px;width:324px;overflow:hidden">Blizzard Entertainment and 2 more pages - Microsoft ...</div>
<div class="t td u" style="left:818px;top:450px;width:258px;overflow:hidden">https://www.blizzard.com/en-us/?ref=battle...</div>
<div class="t td tm" style="left:1083px;top:450px;">10:00:55</div>
<div class="t td" style="left:289px;top:472px;width:190px;overflow:hidden;font-size:13.7px">playhearthstone.com</div>
<div class="t td" style="left:487px;top:472px;width:324px;overflow:hidden">Blizzard Entertainment and 2 more pages - Microsoft ...</div>
<div class="t td u" style="left:818px;top:472px;width:258px;overflow:hidden">https://playhearthstone.com/en-us/expan...</div>
<div class="t td tm" style="left:1083px;top:472px;">10:01:06</div>
<div class="t td" style="left:289px;top:494px;width:190px;overflow:hidden;font-size:13.7px">playhearthstone.com</div>
<div class="t td" style="left:487px;top:494px;width:324px;overflow:hidden">Saviors of Uldum - Hearthstone and 2 more pages ...</div>
<div class="t td u" style="left:818px;top:494px;width:258px;overflow:hidden">https://playhearthstone.com/en-us/expan...</div>
<div class="t td tm" style="left:1083px;top:494px;">10:01:10</div>
<div class="t td" style="left:289px;top:516px;width:190px;overflow:hidden;font-size:13.7px">us.shop.battle.net</div>
<div class="t td" style="left:487px;top:516px;width:324px;overflow:hidden">Blizzard Shop and 2 more pages - Microsoft Edge</div>
<div class="t td u" style="left:818px;top:516px;width:258px;overflow:hidden">https://us.shop.battle.net/en-us</div>
<div class="t td tm" style="left:1083px;top:516px;">10:01:17</div>
<div class="t td" style="left:289px;top:538px;width:190px;overflow:hidden;font-size:13.7px">blizzard.com</div>
<div class="t td" style="left:487px;top:538px;width:324px;overflow:hidden">Blizzard Shop and 2 more pages - Microsoft Edge</div>
<div class="t td u" style="left:818px;top:538px;width:258px;overflow:hidden">https://www.blizzard.com/en-us/?ref=battle...</div>
<div class="t td tm" style="left:1083px;top:538px;">10:01:21</div>
<div class="t td" style="left:289px;top:560px;width:190px;overflow:hidden;font-size:13.7px">bing.com</div>
<div class="t td" style="left:487px;top:560px;width:324px;overflow:hidden">New tab and 3 more pages - Microsoft Edge</div>
<div class="t td u" style="left:818px;top:560px;width:258px;overflow:hidden">https://www.bing.com/search?q=citibank&amp;...</div>
<div class="t td tm" style="left:1083px;top:560px;">10:01:26</div>
<div class="t td" style="left:289px;top:582px;width:190px;overflow:hidden;font-size:13.7px">bing.com</div>
<div class="t td" style="left:487px;top:582px;width:324px;overflow:hidden">citibank - Bing and 3 more pages - Microsoft Edge</div>
<div class="t td u" style="left:818px;top:582px;width:258px;overflow:hidden">https://www.bing.com/search?q=citibank&amp;...</div>
<div class="t td tm" style="left:1083px;top:582px;">10:01:29</div>
<div class="t td" style="left:289px;top:604px;width:190px;overflow:hidden;font-size:13.7px">online.citi.com</div>
<div class="t td" style="left:487px;top:604px;width:324px;overflow:hidden">[private]</div>
<div class="t td u" style="left:818px;top:604px;width:258px;overflow:hidden">[private]</div>
<div class="t td tm" style="left:1083px;top:604px;">10:01:31</div>
<div class="t td" style="left:289px;top:626px;width:190px;overflow:hidden;font-size:13.7px">citi.com</div>
<div class="t td" style="left:487px;top:626px;width:324px;overflow:hidden">[private]</div>
<div class="t td u" style="left:818px;top:626px;width:258px;overflow:hidden">[private]</div>
<div class="t td tm" style="left:1083px;top:626px;">10:02:03</div>
<div class="t td" style="left:289px;top:648px;width:190px;overflow:hidden;font-size:13.7px">msn.com</div>
<div class="t td" style="left:487px;top:648px;width:324px;overflow:hidden">A Canadian arrested abroad has made ‘serious and ...</div>
<div class="t td u" style="left:818px;top:648px;width:258px;overflow:hidden">https://www.msn.com/en-ca/news/politics/...</div>
<div class="t td tm" style="left:1083px;top:648px;">10:02:46</div>
<div class="t td" style="left:289px;top:670px;width:190px;overflow:hidden;font-size:13.7px">cbc.ca</div>
<div class="t td" style="left:487px;top:670px;width:324px;overflow:hidden">A Canadian arrested abroad has made ‘serious and ...</div>
<div class="t td u" style="left:818px;top:670px;width:258px;overflow:hidden">http://www.cbc.ca/</div>
<div class="t td tm" style="left:1083px;top:670px;">10:02:59</div>
<div class="t td" style="left:289px;top:692px;width:190px;overflow:hidden;font-size:13.7px">cbc.ca</div>
<div class="t td" style="left:487px;top:692px;width:324px;overflow:hidden">cbc.ca and 3 more pages - Microsoft Edge</div>
<div class="t td u" style="left:818px;top:692px;width:258px;overflow:hidden">https://www.cbc.ca/</div>
<div class="t td tm" style="left:1083px;top:692px;">10:03:01</div>
<div class="t td" style="left:289px;top:714px;width:190px;overflow:hidden;font-size:13.7px">cbc.ca</div>
<div class="t td" style="left:487px;top:714px;width:324px;overflow:hidden">CBC.ca - watch, listen, and discover with Canada&#x27;s P...</div>
<div class="t td u" style="left:818px;top:714px;width:258px;overflow:hidden">https://www.cbc.ca/</div>
<div class="t td tm" style="left:1083px;top:714px;">10:03:10</div>
<div class="t td" style="left:289px;top:736px;width:190px;overflow:hidden;font-size:13.7px">cbc.ca</div>
<div class="t td" style="left:487px;top:736px;width:324px;overflow:hidden">cbc.ca and 3 more pages - Microsoft Edge</div>
<div class="t td u" style="left:818px;top:736px;width:258px;overflow:hidden">https://www.cbc.ca/news/thenational/will-tr...</div>
<div class="t td tm" style="left:1083px;top:736px;">10:03:32</div>
<div class="t td" style="left:289px;top:758px;width:190px;overflow:hidden;font-size:13.7px">cbc.ca</div>
<div class="t td" style="left:487px;top:758px;width:324px;overflow:hidden">Will Trudeau&#x27;s SNC-Lavalin ethics breach hit Liberal...</div>
<div class="t td u" style="left:818px;top:758px;width:258px;overflow:hidden">https://www.cbc.ca/news/thenational/will-tr...</div>
<div class="t td tm" style="left:1083px;top:758px;">10:03:34</div>
<div class="t td" style="left:289px;top:780px;width:190px;overflow:hidden;font-size:13.7px">cbc.ca</div>
<div class="t td" style="left:487px;top:780px;width:324px;overflow:hidden">CBC News - Latest Canada, World, Entertainment an...</div>
<div class="t td u" style="left:818px;top:780px;width:258px;overflow:hidden">https://www.cbc.ca/news</div>
<div class="t td tm" style="left:1083px;top:780px;">10:03:38</div>
<div class="t td" style="left:289px;top:802px;width:190px;overflow:hidden;font-size:13.7px">cbc.ca</div>
<div class="t td" style="left:487px;top:802px;width:324px;overflow:hidden">CBC News - Latest Canada, World, Entertainment an...</div>
<div class="t td u" style="left:818px;top:802px;width:258px;overflow:hidden">https://www.cbc.ca/news/canada/edmont...</div>
<div class="t td tm" style="left:1083px;top:802px;">10:03:46</div>
<div class="t td" style="left:289px;top:824px;width:190px;overflow:hidden;font-size:13.7px">cbc.ca</div>
<div class="t td" style="left:487px;top:824px;width:324px;overflow:hidden">Infant formula at Edmonton Walmart may have been t...</div>
<div class="t td u" style="left:818px;top:824px;width:258px;overflow:hidden">https://www.cbc.ca/news/canada/edmont...</div>
<div class="t td tm" style="left:1083px;top:824px;">10:03:49</div>
<div class="abs" style="left:257px;top:891px;width:933px;height:29px;background:#5a699b;border-left:1px solid #c8d0ea;border-bottom:2px solid #c8d0ea"></div>
<div class="abs" style="left:260px;top:914px;width:70px;height:3px;background:#b8c8ec"></div>
<div class="abs" style="left:336px;top:914px;width:97px;height:3px;background:#f6d470"></div>
<div class="abs" style="left:438px;top:914px;width:105px;height:3px;background:#b8c8a0"></div>
<div class="abs" style="left:548px;top:914px;width:110px;height:3px;background:#e88a9a"></div>
<div class="abs" style="left:803px;top:914px;width:64px;height:3px;background:#98c0b0"></div>
<div class="abs" style="left:872px;top:914px;width:67px;height:3px;background:#f6a878"></div>
<div class="abs" style="left:944px;top:914px;width:128px;height:3px;background:#d8a8c8"></div>
<div class="abs" style="left:661px;top:890px;width:140px;height:29px;background:#f4f6fc"></div>
<div class="abs" style="left:661px;top:914px;width:140px;height:3px;background:#c0a8e0"></div>
<div class="t btab" style="left:286px;top:895px;">Screen</div>
<div class="t btab" style="left:362px;top:895px;">Keystrokes</div>
<div class="t btab" style="left:465px;top:895px;">Applications</div>
<div class="t btab" style="left:574px;top:895px;">Apps History</div>
<div class="t btab" style="left:830px;top:895px;">Email</div>
<div class="t btab" style="left:898px;top:895px;">Skype</div>
<div class="t btab" style="left:970px;top:895px;">Remote Control</div>
<div class="t btab" style="left:689px;top:894px;color:#1a5aa8;font-weight:bold;font-size:14.3px">Internet History</div>
<svg class="ic" style="left:263px;top:894px;" width="20" height="16" viewBox="0 0 20 16" ><rect x="1" y="3" width="18" height="11" rx="1" fill="#d8dce4" stroke="#777"/><path d="M3 6h14M3 9h14M5 12h10" stroke="#999"/></svg>
<svg class="ic" style="left:339px;top:892px;" width="22" height="20" viewBox="0 0 22 20" ><rect x="1" y="1" width="20" height="14" fill="#ccc" stroke="#777"/><rect x="3" y="3" width="16" height="10" fill="#3aa0d8"/><rect x="6" y="16" width="10" height="3" fill="#999"/></svg>
<svg class="ic" style="left:442px;top:894px;" width="20" height="17" viewBox="0 0 20 17" ><rect x="1" y="1" width="18" height="15" fill="#e8e8e8" stroke="#888"/><rect x="1" y="1" width="18" height="3" fill="#aaa"/><rect x="5" y="8" width="4" height="4" fill="#d83a3a"/><rect x="11" y="8" width="4" height="4" fill="#3ab03a"/></svg>
<svg class="ic" style="left:552px;top:894px;" width="20" height="17" viewBox="0 0 20 17" ><rect x="1" y="1" width="18" height="15" fill="#5a9ad8" stroke="#666"/><rect x="3" y="4" width="14" height="4" fill="#bcd8f0"/><path d="M3 11h14M3 13h14" stroke="#e0ecf8"/></svg>
<svg class="ic" style="left:665px;top:891px;" width="22" height="22" viewBox="0 0 22 22" ><circle cx="12" cy="11" r="9" fill="#e8e8e8" stroke="#4a9a4a" stroke-width="2"/><path d="M12 5v6h4" stroke="#555" stroke-width="1.5" fill="none"/><path d="M2 14l4 6l5-6z" fill="#2aa02a"/></svg>
<svg class="ic" style="left:806px;top:894px;" width="20" height="15" viewBox="0 0 20 15" ><rect x="1" y="1" width="18" height="13" fill="#f0d890" stroke="#b09040"/><path d="M1 1l9 7l9-7" fill="none" stroke="#b09040"/></svg>
<svg class="ic" style="left:875px;top:891px;" width="20" height="18" viewBox="0 0 20 18" ><ellipse cx="10" cy="8" rx="9" ry="7" fill="#f6d050" stroke="#c09a20"/><path d="M6 13l-2 5l6-4z" fill="#f6d050"/></svg>
<svg class="ic" style="left:949px;top:890px;" width="14" height="22" viewBox="0 0 14 22" ><rect x="2" y="1" width="10" height="20" rx="2" fill="#d8d8d8" stroke="#777"/><circle cx="5" cy="5" r="1.2" fill="#d33"/><circle cx="9" cy="5" r="1.2" fill="#3a3"/><path d="M4 9h6M4 12h6M4 15h6" stroke="#555" stroke-width="1.2"/></svg>
<div class="abs" style="left:1199px;top:151px;width:248px;height:771px;background:#e8ecf7"></div>
<div class="abs" style="left:1199px;top:151px;width:250px;height:28px;background:#41528f"></div>
<div class="t pane" style="left:1203px;top:157px;color:#fff">Tasks Pane</div>
<svg class="ic" style="left:1386px;top:163px;" width="10" height="6" viewBox="0 0 10 6" ><path d="M0 0h10l-5 6z" fill="#c0c8e4"/></svg>
<svg class="ic" style="left:1408px;top:159px;" width="11" height="14" viewBox="0 0 11 14" ><path d="M2.5 1h6M3 1v6h5V1M1 7.5h9M5.5 7.5v6" stroke="#e8ecf8" stroke-width="1.4" fill="none"/></svg>
<svg class="ic" style="left:1432px;top:160px;" width="10" height="10" viewBox="0 0 10 10" ><path d="M1 1L9 9M9 1L1 9" stroke="#e8ecf8" stroke-width="1.5"/></svg>
<svg class="ic" style="left:1208px;top:190px;" width="8" height="8" viewBox="0 0 8 8" ><path d="M8 0v8H0z" fill="#8aa0c8"/></svg>
<div class="t sect" style="left:1228px;top:185px;">Dashboard</div>
<svg class="ic" style="left:1203px;top:206px;" width="31" height="31" viewBox="0 0 31 31" ><g fill="#3c3c3c">
<rect x="8.7" y="1.2" width="12.6" height="9.8" rx="1.2"/><rect x="13.5" y="11" width="3" height="2.5"/><rect x="11.5" y="13.2" width="7" height="1.6" rx=".6"/>
<rect x="0" y="18.6" width="12.6" height="9.6" rx="1.2"/><rect x="4.8" y="28.2" width="3" height="1.6"/><rect x="2.8" y="29.6" width="7" height="1.5" rx=".6"/>
<rect x="17.4" y="18.6" width="12.6" height="9.6" rx="1.2"/><rect x="22.2" y="28.2" width="3" height="1.6"/><rect x="20.2" y="29.6" width="7" height="1.5" rx=".6"/>
</g>
<g fill="#e8eaf4"><rect x="10.6" y="3.2" width="8.8" height="5.8"/><rect x="1.9" y="20.5" width="8.8" height="5.8"/><rect x="19.3" y="20.5" width="8.8" height="5.8"/></g>
<path d="M11.5 13.5Q8 14 7 18M18.5 13.5Q22 14 23 18" fill="none" stroke="#4a90e0" stroke-width="1.6"/></svg>
<div class="t task" style="left:1244px;top:214px;">Open Dashboard</div>
<div class="t task" style="left:1244px;top:247px;">Switch Size</div>
<div class="t task" style="left:1244px;top:280px;">Reset Dashboard</div>
<svg class="ic" style="left:1208px;top:315px;" width="8" height="8" viewBox="0 0 8 8" ><path d="M8 0v8H0z" fill="#8aa0c8"/></svg>
<div class="t sect" style="left:1228px;top:310px;">View Logs and Reports</div>
<svg class="ic" style="left:1205px;top:332px;" width="22" height="31" viewBox="0 0 22 31" ><path d="M11 12C15 13 17.5 17 16.5 21C15.5 25 11.5 28 7.6 28.6" fill="none" stroke="#8fd0ee" stroke-width="2.4" stroke-linecap="round"/>
<path d="M12 14C14.5 15 15.5 18 15 21" fill="none" stroke="#c8ecfa" stroke-width="1"/>
<path d="M14.3 9C14.6 5.5 13.5 2.2 11.8 2.2C8.5 3 3 7.5 3 12C3 15 5.5 17.5 8 19" fill="none" stroke="#2c5878" stroke-width="2.3" stroke-linecap="round"/>
<circle cx="8" cy="19" r="2.2" fill="#123a5a"/></svg>
<div class="t task" style="left:1244px;top:339px;">Open Web Console</div>
<svg class="ic" style="left:1208px;top:374px;" width="8" height="8" viewBox="0 0 8 8" ><path d="M8 0v8H0z" fill="#8aa0c8"/></svg>
<div class="t sect" style="left:1228px;top:369px;">Remote Agent</div>
<svg class="ic" style="left:1201px;top:390px;" width="32" height="32" viewBox="0 0 32 32" ><g opacity="1.0">
<defs><linearGradient id="cg" x1="0" x2="1"><stop offset="0" stop-color="#9a9a9a"/><stop offset=".35" stop-color="#3a3a3a"/><stop offset="1" stop-color="#505050"/></linearGradient></defs>
<rect x="3" y="1" width="19" height="18" rx="2" fill="url(#cg)"/>
<circle cx="11.5" cy="9.5" r="5.5" fill="#d0d0d0"/>
<circle cx="11.5" cy="9.5" r="3.3" fill="#2a2a2a"/>
<rect x="8" y="10.5" width="7" height="1.6" fill="#e0b030"/>
<circle cx="19" cy="4.5" r="2.8" fill="#e06048"/>
<rect x="10" y="19" width="4" height="7" fill="#505050"/>
<rect x="3" y="26" width="18" height="3" fill="#5a5a5a"/>
</g><rect x="13" y="10" width="16" height="20" rx="1.5" fill="#c59a48" stroke="#8a6a2a" stroke-width="1"/>
<rect x="15" y="13" width="12" height="15" fill="#f6f6f2"/>
<rect x="18" y="9" width="6" height="4" rx="1" fill="#888"/><path d="M17 21l3 4l6 -7" fill="none" stroke="#20a020" stroke-width="2.6"/></svg>
<div class="t task" style="left:1244px;top:398px;">Agent Properties...</div>
<svg class="ic" style="left:1201px;top:423px;filter:grayscale(1)" width="32" height="32" viewBox="0 0 32 32" ><g opacity=".8"><rect x="1" y="2" width="22" height="16" rx="1" fill="#d8dce4" stroke="#8a9099" stroke-width="1"/>
<rect x="3" y="4" width="18" height="11" fill="#3f95d8"/>
<rect x="3" y="4" width="18" height="5" fill="#7ec0ee"/>
<rect x="10" y="18" width="4" height="3" fill="#8a9099"/>
<rect x="5" y="21" width="14" height="2" fill="#9aa0a8"/><g opacity="1"><ellipse cx="19" cy="21" rx="10" ry="7" fill="#f0d8a0" stroke="#d0b070" stroke-width="1"/><path d="M16 26l-1 6l6 -5z" fill="#f0d8a0"/></g></g></svg>
<div class="t task grey" style="left:1244px;top:431px;">Send Instant Message...</div>
<svg class="ic" style="left:1201px;top:456px;filter:grayscale(1)" width="32" height="32" viewBox="0 0 32 32" ><g opacity="0.8">
<defs><linearGradient id="cg" x1="0" x2="1"><stop offset="0" stop-color="#9a9a9a"/><stop offset=".35" stop-color="#3a3a3a"/><stop offset="1" stop-color="#505050"/></linearGradient></defs>
<rect x="3" y="1" width="19" height="18" rx="2" fill="url(#cg)"/>
<circle cx="11.5" cy="9.5" r="5.5" fill="#d0d0d0"/>
<circle cx="11.5" cy="9.5" r="3.3" fill="#2a2a2a"/>
<rect x="8" y="10.5" width="7" height="1.6" fill="#e0b030"/>
<circle cx="19" cy="4.5" r="2.8" fill="#e06048"/>
<rect x="10" y="19" width="4" height="7" fill="#505050"/>
<rect x="3" y="26" width="18" height="3" fill="#5a5a5a"/>
</g><path d="M15 15L28 28M28 15L15 28" stroke="#e03030" stroke-width="2.6" stroke-linecap="round" opacity="0.7"/></svg>
<div class="t task grey" style="left:1244px;top:464px;">Delete Agent from list...</div>
<div class="abs" style="left:1203px;top:505px;width:242px;height:1px;background:#9aa0b0"></div>
<div class="t task grey" style="left:1244px;top:530px;">Change Agent Password...</div>
<svg class="ic" style="left:1206px;top:556px;" width="32" height="32" viewBox="0 0 32 32" ><rect x="3" y="3" width="3" height="10" fill="#9a9a9a"/>
<rect x="2" y="13" width="5" height="16" rx="2.2" fill="#c8282a"/>
<path d="M14 3c-2 0-3 2-3 4s2 3 3 4v16c0 1 1 2 2 2s2-1 2-2V11c1-1 3-2 3-4s-1-4-3-4v4h-4z" fill="#b8bcc0" stroke="#707478" stroke-width="1"/></svg>
<div class="t task" style="left:1244px;top:563px;">Install Agent...</div>
<svg class="ic" style="left:1201px;top:588px;" width="32" height="32" viewBox="0 0 32 32" ><g opacity="1.0">
<defs><linearGradient id="cg" x1="0" x2="1"><stop offset="0" stop-color="#9a9a9a"/><stop offset=".35" stop-color="#3a3a3a"/><stop offset="1" stop-color="#505050"/></linearGradient></defs>
<rect x="3" y="1" width="19" height="18" rx="2" fill="url(#cg)"/>
<circle cx="11.5" cy="9.5" r="5.5" fill="#d0d0d0"/>
<circle cx="11.5" cy="9.5" r="3.3" fill="#2a2a2a"/>
<rect x="8" y="10.5" width="7" height="1.6" fill="#e0b030"/>
<circle cx="19" cy="4.5" r="2.8" fill="#e06048"/>
<rect x="10" y="19" width="4" height="7" fill="#505050"/>
<rect x="3" y="26" width="18" height="3" fill="#5a5a5a"/>
</g><g fill="none" stroke="#28b028" stroke-width="4.5">
<path d="M10.5 21.5 A7.5 7.5 0 0 1 23 15.5"/><path d="M25 21 A7.5 7.5 0 0 1 12.5 27"/></g>
<path d="M19.5 11 L29 14.5 L22.5 21 Z" fill="#28b028"/><path d="M15.5 31.5 L6.5 28 L12.5 21.5 Z" fill="#28b028"/>
<g fill="none" stroke="#90f090" stroke-width="1.2" opacity=".8"><path d="M11.5 20 A6 6 0 0 1 21.5 15"/></g></svg>
<div class="t task" style="left:1244px;top:596px;">Search for Agents</div>
<svg class="ic" style="left:1208px;top:631px;" width="8" height="8" viewBox="0 0 8 8" ><path d="M8 0v8H0z" fill="#8aa0c8"/></svg>
<div class="t sect" style="left:1228px;top:626px;">View</div>
<svg class="ic" style="left:1201px;top:647px;" width="32" height="32" viewBox="0 0 32 32" ><g opacity="1.0">
<defs><linearGradient id="cg" x1="0" x2="1"><stop offset="0" stop-color="#9a9a9a"/><stop offset=".35" stop-color="#3a3a3a"/><stop offset="1" stop-color="#505050"/></linearGradient></defs>
<rect x="3" y="1" width="19" height="18" rx="2" fill="url(#cg)"/>
<circle cx="11.5" cy="9.5" r="5.5" fill="#d0d0d0"/>
<circle cx="11.5" cy="9.5" r="3.3" fill="#2a2a2a"/>
<rect x="8" y="10.5" width="7" height="1.6" fill="#e0b030"/>
<circle cx="19" cy="4.5" r="2.8" fill="#e06048"/>
<rect x="10" y="19" width="4" height="7" fill="#505050"/>
<rect x="3" y="26" width="18" height="3" fill="#5a5a5a"/>
</g><circle cx="22" cy="21" r="8" fill="#d8e4ee" stroke="#8aa0b0" stroke-width="1"/>
<path d="M22 21L30 17A8 8 0 0 1 29 24z" fill="#e8b0e0" opacity=".8"/>
<path d="M22 21L14 24A8 8 0 0 1 16 16z" fill="#a0e0f0" opacity=".8"/>
<circle cx="22" cy="21" r="2.5" fill="#fff" stroke="#888" stroke-width="1"/></svg>
<div class="t task" style="left:1244px;top:655px;">Switch to Full Screen</div>
<svg class="ic" style="left:1202px;top:681px;" width="32" height="32" viewBox="0 0 32 32" ><path d="M3 14L15 3L27 14" fill="none" stroke="#4a68b8" stroke-width="2.5"/>
<rect x="5" y="4" width="3" height="6" fill="#3a5aa8"/>
<path d="M6 13L15 5L24 13V27H6z" fill="#dfe3ea" stroke="#8a9098" stroke-width="1"/>
<rect x="8" y="15" width="5" height="5" fill="#9ac0e0" stroke="#6a7a8a" stroke-width=".8"/>
<rect x="16" y="15" width="6" height="12" fill="#2a4a8a"/>
<rect x="17" y="17" width="4" height="3" fill="#6a9ad0"/>
<rect x="4" y="26" width="22" height="2" fill="#8a8a8a"/></svg>
<div class="t task" style="left:1244px;top:688px;">Options</div>
<div class="t task" style="left:1244px;top:721px;">Close All Tabs</div>
<div class="t task" style="left:1244px;top:757px;">Buy Now</div>
<div class="t task" style="left:1244px;top:790px;">Contact Tech Support</div>
<div class="t task" style="left:1244px;top:823px;">SoftActivity website</div>
<div class="abs" style="left:1203px;top:864px;width:242px;height:1px;background:#9aa0b0"></div>
<div class="t task" style="left:1244px;top:889px;">Copyright © 2019</div>
<div class="abs" style="left:1199px;top:908px;width:248px;height:13px;background:#cdd5ee;border-top:1px solid #c0c8e0"></div>
<svg class="ic" style="left:1321px;top:913px;" width="8" height="5" viewBox="0 0 8 5" ><path d="M0 0h8l-4 5z" fill="#666"/></svg>
<div class="abs" style="left:0;top:922px;width:1452px;height:30px;background:#40508c"></div>
<div class="t status" style="left:12px;top:929px;">To Start Monitoring Double Click on the Computer Icon in Remote Agents List</div>
<svg class="ic" style="left:1432px;top:933px;" width="14" height="14" viewBox="0 0 14 14" ><g fill="#c8d0e8"><rect x="10" y="0" width="3" height="3"/><rect x="5" y="5" width="3" height="3"/><rect x="10" y="5" width="3" height="3"/><rect x="0" y="10" width="3" height="3"/><rect x="5" y="10" width="3" height="3"/><rect x="10" y="10" width="3" height="3"/></g></svg>
<svg class="ic" style="left:760px;top:55px" width="330" height="145" viewBox="760 55 330 145">
<path d="M900 61H1070A10 10 0 0 1 1080 71V158A10 10 0 0 1 1070 168H900A10 10 0 0 1 890 158V154L772.5 192L890 122V71A10 10 0 0 1 900 61Z" fill="#968294" fill-opacity=".93" stroke="#fff" stroke-width="3.5" stroke-linejoin="round"/>
</svg>
<div class="t callt" style="left:884px;width:200px;top:71.2px;font-size:15.5px;line-height:21.6px;letter-spacing:.65px">Click to view complete</div>
<div class="t callt" style="left:884px;width:200px;top:92.8px;font-size:15.5px;line-height:21.6px;letter-spacing:.65px">Internet usage reports</div>
<div class="t callt" style="left:884px;width:200px;top:114.4px;font-size:15.5px;line-height:21.6px;letter-spacing:.65px">and logs with</div>
<div class="t callt" style="left:884px;width:200px;top:136.0px;font-size:15.5px;line-height:21.6px;letter-spacing:.65px">screenshots</div>
<svg class="ic" style="left:560px;top:400px" width="340" height="250" viewBox="560 400 340 250"><path d="M611 420L709 467L711.5 428L735.6 453.5L795.5 399L806 452L864 457.6L824 488.4L879.4 505L831 523.8L863 555.7L813 558L845 593L775.5 568.7L761 586L734.4 570.6L665.6 627.4L693.4 552.5L627 555L642.6 528.4L593 514L633 495.7L615 475L650 468Z" fill="#968294" fill-opacity=".9" stroke="#fbfbfd" stroke-width="4.5" stroke-linejoin="miter"/></svg>
<div class="t callt" style="left:636px;width:200px;top:475.5px;font-size:17px;line-height:22.7px;letter-spacing:.7px">View their web</div>
<div class="t callt" style="left:636px;width:200px;top:498.3px;font-size:17px;line-height:22.7px;letter-spacing:.7px">surfing history in</div>
<div class="t callt" style="left:636px;width:200px;top:521.1px;font-size:17px;line-height:22.7px;letter-spacing:.7px">real time</div>
<div class="abs" style="left:0;top:0;width:1452px;height:1px;background:#1f5aa6"></div>
<div class="abs" style="left:2px;top:1px;width:1448px;height:2px;background:#dfe2f2"></div>
<div class="abs" style="left:0;top:0;width:1px;height:922px;background:#1f5aa6"></div>
<div class="abs" style="left:1px;top:1px;width:1px;height:921px;background:#7a9ad0"></div>
<div class="abs" style="left:2px;top:1px;width:1px;height:113px;background:#e6e9f6"></div>
<div class="abs" style="left:1449px;top:0;width:2px;height:922px;background:#cdd5ee"></div>
<div class="abs" style="left:1451px;top:0;width:1px;height:922px;background:#1f5aa6"></div>
</body></html>
